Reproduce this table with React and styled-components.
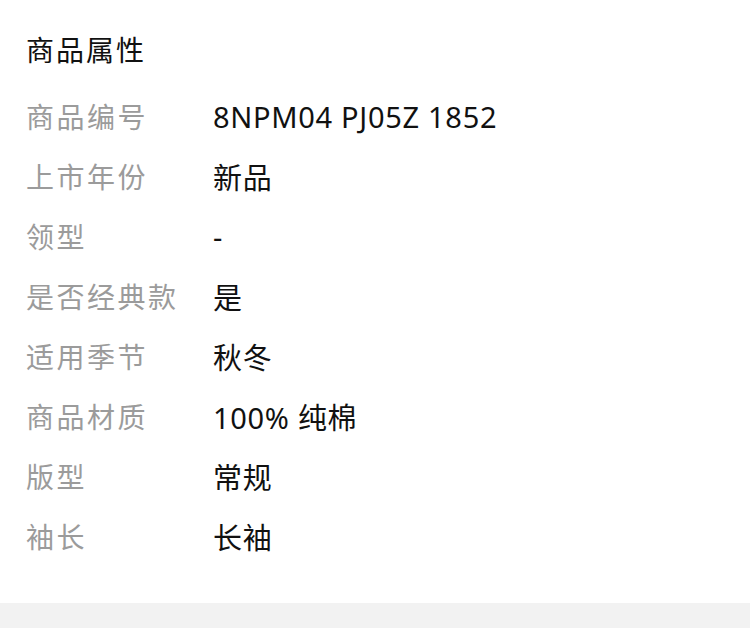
import React from "react";
import styled, { createGlobalStyle } from "styled-components";

const Global = createGlobalStyle`
  html, body { margin: 0; padding: 0; background: #fff; }
  body { font-family: "Noto Sans", "Noto Sans CJK SC", sans-serif; }
`;

const Page = styled.div`
  display: flex;
  flex-direction: column;
  min-height: 628px;
`;

const Section = styled.section`
  padding: 30px 26px 37px;
  background: #fff;
`;

const Title = styled.h2`
  margin: 0 0 16px;
  font-size: 28px;
  line-height: 40px;
  font-weight: 400;
  letter-spacing: 2px;
  color: #111;
`;

const Row = styled.div`
  display: grid;
  grid-template-columns: 187px 1fr;
  height: 60px;
  align-items: center;
  font-size: 28px;
`;

const Label = styled.span`
  color: #9b9b9b;
  letter-spacing: 2.5px;
`;

const Value = styled.span`
  color: #111;
  font-size: 29px;
  letter-spacing: 0.7px;
`;

const Footer = styled.div`
  flex: 1;
  background: #f2f2f2;
`;

const rows = [
  ["商品编号", "8NPM04 PJ05Z 1852"],
  ["上市年份", "新品"],
  ["领型", "-"],
  ["是否经典款", "是"],
  ["适用季节", "秋冬"],
  ["商品材质", "100% 纯棉"],
  ["版型", "常规"],
  ["袖长", "长袖"],
];

export default function App() {
  return (
    <Page>
      <Global />
      <Section>
        <Title>商品属性</Title>
        {rows.map(([k, v]) => (
          <Row key={k}>
            <Label>{k}</Label>
            <Value>{v}</Value>
          </Row>
        ))}
      </Section>
      <Footer />
    </Page>
  );
}
